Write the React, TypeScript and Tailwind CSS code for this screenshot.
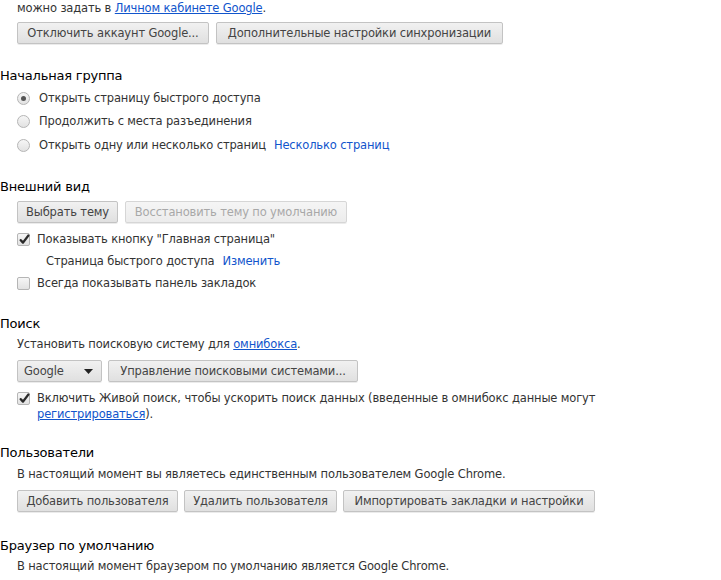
import React from "react";

const font = { fontFamily: '"DejaVu Sans", "Liberation Sans", sans-serif' };

function Btn({ children, disabled = false, className = "" }: { children: React.ReactNode; disabled?: boolean; className?: string }) {
  return (
    <button
      className={
        "h-[22px] whitespace-nowrap rounded-[2px] border bg-gradient-to-b px-0 text-center text-[11.5px] leading-[20px] tracking-[-0.15px] shadow-[0_1px_0_rgba(0,0,0,0.08)] " +
        (disabled ? "border-[#d6d6d6] from-[#f5f5f5] to-[#ececec] text-[#a8a8a8]" : "border-[#c3c3c3] from-[#f1f1f1] to-[#e0e0e0] text-[#444]") +
        " " +
        className
      }
    >
      {children}
    </button>
  );
}

function Radio({ checked = false }: { checked?: boolean }) {
  return (
    <span className="flex h-[13px] w-[13px] shrink-0 items-center justify-center rounded-full border border-[#b5b5b5] bg-gradient-to-b from-[#f6f6f6] to-[#e2e2e2]">
      {checked && <span className="h-[5px] w-[5px] rounded-full bg-[#555]" />}
    </span>
  );
}

function Check({ checked = false }: { checked?: boolean }) {
  return (
    <span className="relative flex h-[13px] w-[13px] shrink-0 items-center justify-center rounded-[2px] border border-[#b5b5b5] bg-gradient-to-b from-[#f6f6f6] to-[#e2e2e2]">
      {checked && (
        <svg width="11" height="11" viewBox="0 0 11 11" className="absolute left-[1px] top-[0px]">
          <path d="M1.8 6.2 L4 8.6 L9.3 1.6" stroke="#2a2a2a" strokeWidth="2.4" fill="none" strokeLinecap="round" strokeLinejoin="round" />
        </svg>
      )}
    </span>
  );
}

function Heading({ children, className = "" }: { children: React.ReactNode; className?: string }) {
  return <div className={"h-[18px] text-[13px] leading-[18px] tracking-[-0.2px] text-black " + className}>{children}</div>;
}

const link = "text-[#15c] underline";

export default function App() {
  return (
    <div className="h-[580px] w-[721px] overflow-hidden bg-white text-[11.5px] leading-[15px] tracking-[-0.15px] text-[#333]" style={font}>
      <div className="h-[15px] pl-[17px] pt-[1px]">
        можно задать в <span className={link}>Личном кабинете Google</span>.
      </div>
      <div className="mt-[7px] flex gap-[7px] pl-[17px]">
        <Btn className="w-[192px]">Отключить аккаунт Google...</Btn>
        <Btn className="w-[287px]">Дополнительные настройки синхронизации</Btn>
      </div>

      <Heading className="mt-[23px]">Начальная группа</Heading>
      <div className="mt-[6px] flex flex-col pl-[17px]">
        <div className="flex h-[15px] items-center gap-[9px]">
          <Radio checked />
          <span>Открыть страницу быстрого доступа</span>
        </div>
        <div className="mt-[8px] flex h-[15px] items-center gap-[9px]">
          <Radio />
          <span>Продолжить с места разъединения</span>
        </div>
        <div className="mt-[9px] flex h-[15px] items-center gap-[9px]">
          <Radio />
          <span>Открыть одну или несколько страниц</span>
          <span className="-ml-[1px] text-[#15c]">Несколько страниц</span>
        </div>
      </div>

      <Heading className="mt-[25px]">Внешний вид</Heading>
      <div className="mt-[5px] flex gap-[7px] pl-[17px]">
        <Btn className="w-[101px]">Выбрать тему</Btn>
        <Btn disabled className="w-[222px]">Восстановить тему по умолчанию</Btn>
      </div>
      <div className="mt-[9px] flex h-[15px] items-center gap-[7px] pl-[17px]">
        <Check checked />
        <span>Показывать кнопку "Главная страница"</span>
      </div>
      <div className="mt-[7px] flex h-[15px] gap-[8px] pl-[46px]">
        <span>Страница быстрого доступа</span>
        <span className="text-[#15c]">Изменить</span>
      </div>
      <div className="mt-[7px] flex h-[15px] items-center gap-[7px] pl-[17px]">
        <Check />
        <span>Всегда показывать панель закладок</span>
      </div>

      <Heading className="mt-[24px]">Поиск</Heading>
      <div className="mt-[4px] h-[15px] pl-[17px]">
        Установить поисковую систему для <span className={link}>омнибокса</span>.
      </div>
      <div className="mt-[8px] flex gap-[6px] pl-[17px]">
        <div className="flex h-[22px] w-[85px] items-center justify-between rounded-[2px] border border-[#c3c3c3] bg-gradient-to-b from-[#f1f1f1] to-[#e0e0e0] pl-[6px] pr-[8px] text-[#444] shadow-[0_1px_0_rgba(0,0,0,0.08)]">
          <span>Google</span>
          <svg width="9" height="5" viewBox="0 0 9 5">
            <path d="M0 0 H9 L4.5 5 Z" fill="#222" />
          </svg>
        </div>
        <Btn className="w-[250px]">Управление поисковыми системами...</Btn>
      </div>
      <div className="mt-[9px] flex items-start gap-[7px] pl-[17px]">
        <span className="mt-[1px]">
          <Check checked />
        </span>
        <span className="leading-[15.5px]">
          Включить Живой поиск, чтобы ускорить поиск данных (введенные в омнибокс данные могут
          <br />
          <span className={link}>регистрироваться</span>).
        </span>
      </div>

      <Heading className="mt-[22px]">Пользователи</Heading>
      <div className="mt-[5px] h-[15px] pl-[17px]">В настоящий момент вы являетесь единственным пользователем Google Chrome.</div>
      <div className="mt-[8px] flex gap-[6px] pl-[17px]">
        <Btn className="w-[161px]">Добавить пользователя</Btn>
        <Btn className="w-[153px]">Удалить пользователя</Btn>
        <Btn className="w-[252px]">Импортировать закладки и настройки</Btn>
      </div>

      <Heading className="mt-[25px]">Браузер по умолчанию</Heading>
      <div className="mt-[4px] h-[15px] pl-[17px]">В настоящий момент браузером по умолчанию является Google Chrome.</div>
    </div>
  );
}
